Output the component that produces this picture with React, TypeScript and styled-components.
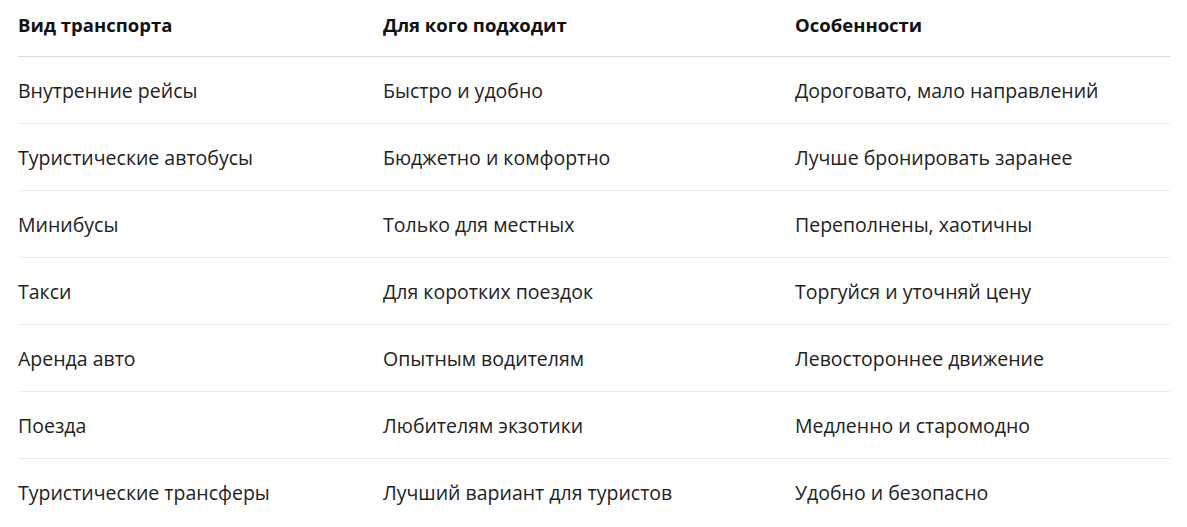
import React from 'react';
import styled, { createGlobalStyle } from 'styled-components';

const GlobalStyle = createGlobalStyle`
  body {
    margin: 0;
    background: #fff;
    font-family: "Open Sans", "Noto Sans", sans-serif;
    color: #1f1f1f;
  }
`;

const Table = styled.div`
  margin: 0 17px 0 18px;
  display: grid;
  grid-template-columns: 365px 412px 1fr;
`;

const HeadCell = styled.div`
  height: 57px;
  padding-top: 12px;
  box-sizing: border-box;
  font-size: 18.5px;
  font-weight: 700;
  color: #111;
  border-bottom: 1px solid #dcdcdc;
`;

const Cell = styled.div<{ last?: boolean }>`
  height: 67px;
  display: flex;
  align-items: center;
  box-sizing: border-box;
  font-size: 19.5px;
  color: #222;
  border-bottom: ${(p) => (p.last ? 'none' : '1px solid #ececec')};
`;

const rows: [string, string, string][] = [
  ['Внутренние рейсы', 'Быстро и удобно', 'Дороговато, мало направлений'],
  ['Туристические автобусы', 'Бюджетно и комфортно', 'Лучше бронировать заранее'],
  ['Минибусы', 'Только для местных', 'Переполнены, хаотичны'],
  ['Такси', 'Для коротких поездок', 'Торгуйся и уточняй цену'],
  ['Аренда авто', 'Опытным водителям', 'Левостороннее движение'],
  ['Поезда', 'Любителям экзотики', 'Медленно и старомодно'],
  ['Туристические трансферы', 'Лучший вариант для туристов', 'Удобно и безопасно'],
];

export default function App() {
  return (
    <>
      <GlobalStyle />
      <Table>
        <HeadCell>Вид транспорта</HeadCell>
        <HeadCell>Для кого подходит</HeadCell>
        <HeadCell>Особенности</HeadCell>
        {rows.map((r, i) =>
          r.map((c, j) => (
            <Cell key={`${i}-${j}`} last={i === rows.length - 1}>
              {c}
            </Cell>
          ))
        )}
      </Table>
    </>
  );
}
